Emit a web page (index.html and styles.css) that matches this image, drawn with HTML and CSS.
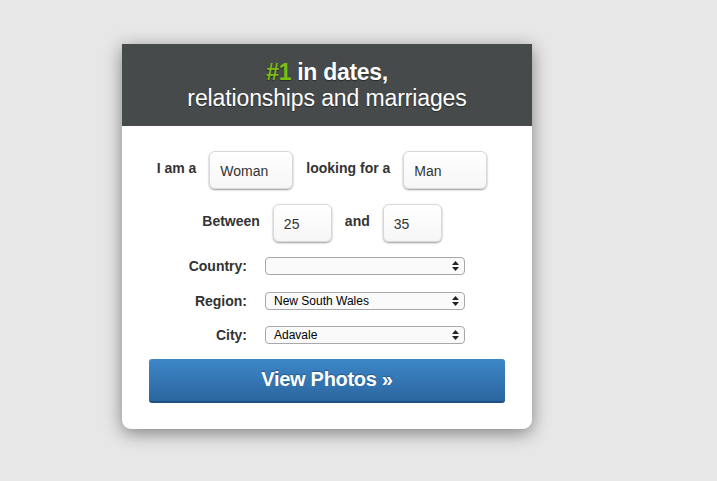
FILE: index.html
```html
<!DOCTYPE html>
<html lang="en">
<head>
<meta charset="utf-8">
<title>#1 in dates</title>
<link rel="stylesheet" href="styles.css">
</head>
<body>
<div class="card">
  <div class="card-head">
    <div class="head-line1"><span class="accent">#1</span> in dates,</div>
    <div class="head-line2">relationships and marriages</div>
  </div>
  <form class="card-body">
    <div class="row">
      <label class="lbl">I am a</label>
      <input class="field field-wide" type="text" value="Woman">
      <label class="lbl">looking for a</label>
      <input class="field field-wide" type="text" value="Man">
    </div>
    <div class="row row-age">
      <label class="lbl">Between</label>
      <input class="field field-narrow" type="text" value="25">
      <label class="lbl">and</label>
      <input class="field field-narrow" type="text" value="35">
    </div>
    <div class="sel-row sel-first">
      <label class="sel-lbl">Country:</label>
      <select class="sel"><option></option></select>
    </div>
    <div class="sel-row">
      <label class="sel-lbl">Region:</label>
      <select class="sel"><option>New South Wales</option></select>
    </div>
    <div class="sel-row sel-last">
      <label class="sel-lbl">City:</label>
      <select class="sel"><option>Adavale</option></select>
    </div>
    <button class="btn" type="button">View Photos &raquo;</button>
  </form>
</div>
</body>
</html>
```
FILE: styles.css
```css
html, body {
  margin: 0;
  padding: 0;
}
body {
  background: #e6e7e6;
  font-family: "Liberation Sans", Arial, Helvetica, sans-serif;
  color: #333;
  height: 481px;
  overflow: hidden;
}
.card {
  width: 410px;
  margin: 44px 0 0 122px;
  background: #fff;
  border-radius: 0 0 9px 9px;
  box-shadow: 0 4px 18px rgba(0, 0, 0, 0.45);
}
.card-head {
  box-sizing: border-box;
  height: 82px;
  padding-top: 16px;
  background: #464a4b;
  color: #fff;
  text-align: center;
  font-size: 23px;
  line-height: 24px;
  text-shadow: 0 1px 1px rgba(0, 0, 0, 0.45);
}
.head-line1 {
  font-weight: bold;
  letter-spacing: -0.3px;
}
.head-line2 {
  margin-top: 2px;
  letter-spacing: -0.12px;
}
.accent {
  color: #7cbd14;
}
.card-body {
  margin: 0;
  padding: 25px 0 26px;
}
.row {
  display: flex;
  align-items: center;
  justify-content: center;
  gap: 13px;
  padding-right: 10px;
}
.row-age {
  margin-top: 15px;
}
.lbl {
  font-size: 14px;
  font-weight: bold;
  color: #333;
  margin-bottom: 4px;
}
.field {
  box-sizing: border-box;
  height: 38px;
  margin: 0;
  padding: 2px 10px 0;
  border: 1px solid #d8d8d8;
  border-radius: 6px;
  background: linear-gradient(#ffffff, #f6f6f6);
  box-shadow: 0 1px 2px rgba(0, 0, 0, 0.4);
  font-family: "Liberation Sans", Arial, sans-serif;
  font-size: 14px;
  color: #333;
}
.field-wide {
  width: 84px;
}
.field-narrow {
  width: 59px;
}
.sel-row {
  display: flex;
  align-items: center;
  gap: 18px;
  margin-top: 17px;
}
.sel-first {
  margin-top: 15px;
}
.sel-last {
  margin-top: 16px;
}
.sel-lbl {
  width: 125px;
  text-align: right;
  font-size: 14px;
  font-weight: bold;
  color: #333;
}
.sel {
  -webkit-appearance: none;
  appearance: none;
  box-sizing: border-box;
  width: 200px;
  height: 18px;
  margin: 0;
  padding: 0 20px 0 8px;
  border: 1px solid #a8a8a8;
  border-radius: 4px;
  background-color: #fafafa;
  background-image: url("data:image/svg+xml,%3Csvg xmlns='http://www.w3.org/2000/svg' width='7' height='10' viewBox='0 0 7 10'%3E%3Cpath d='M3.5 0L7 4H0z M0 6H7L3.5 10z' fill='%23222'/%3E%3C/svg%3E");
  background-repeat: no-repeat;
  background-position: right 5px center;
  font-family: "Liberation Sans", Arial, sans-serif;
  font-size: 12px;
  line-height: 16px;
  color: #000;
}
.btn {
  display: block;
  box-sizing: border-box;
  width: 356px;
  height: 44px;
  margin: 15px 0 0 27px;
  padding: 0 0 2px;
  border: 0;
  border-bottom: 2px solid #1d5283;
  border-radius: 3px;
  background: linear-gradient(#3d87c8, #2b669f);
  color: #fff;
  font-family: "Liberation Sans", Arial, sans-serif;
  font-size: 20px;
  font-weight: bold;
  letter-spacing: -0.3px;
  text-shadow: 0 -1px 1px rgba(0, 0, 0, 0.3);
  cursor: pointer;
}
```
